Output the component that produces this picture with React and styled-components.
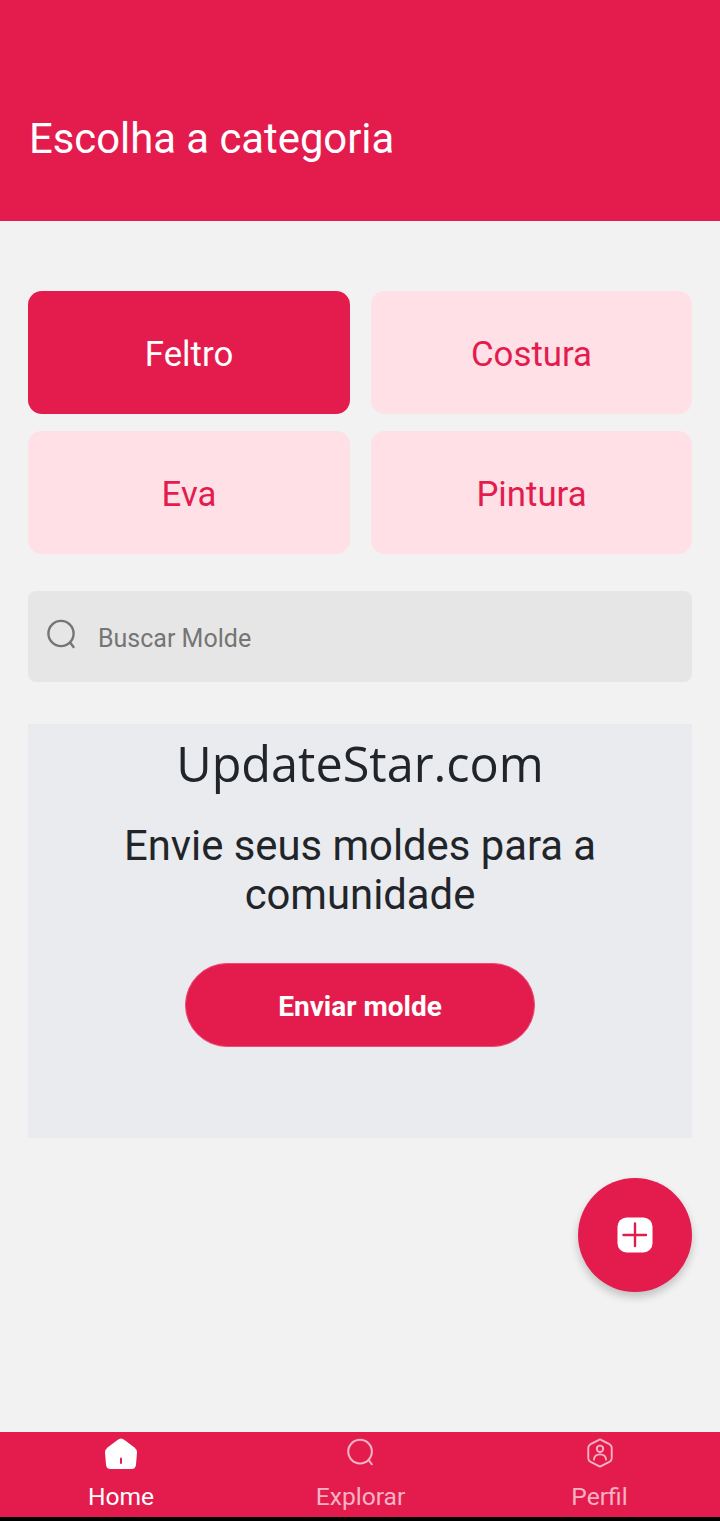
import React from "react";
import styled, {createGlobalStyle} from "styled-components";

const RED = "#e41c4e";

const GlobalStyle = createGlobalStyle`
    html, body {
        margin: 0;
        padding: 0;
        background: #f2f2f2;
        font-family: Roboto, "Noto Sans", sans-serif;
    }
    * {
        box-sizing: border-box;
    }
`

const categories = [
    {name: "Feltro", active: true},
    {name: "Costura"},
    {name: "Eva"},
    {name: "Pintura"},
];

const SearchIcon = ({size = 32, color = "currentColor", width = 2.4}) => (
    <svg width={size} height={size} viewBox="0 0 32 32" fill="none" stroke={color} strokeWidth={width} strokeLinecap="round">
        <circle cx="15" cy="14.5" r="12.6"/>
        <path d="M24.5 24 L27.5 28"/>
    </svg>
);

const HomeIcon = () => (
    <svg width="34" height="32" viewBox="0 0 34 32">
        <path
            d="M17 0.5 Q18.8 0.5 20.5 2 L30.5 9.5 Q33 11.5 33 14.5 L32 26.5 Q31.6 31 27.5 31 L6.5 31 Q2.4 31 2 26.5 L1 14.5 Q1 11.5 3.5 9.5 L13.5 2 Q15.2 0.5 17 0.5 Z"
            fill="#fff"
        />
        <path d="M17 20.5 V25" stroke={RED} strokeWidth="2" strokeLinecap="round"/>
    </svg>
);

const ProfileIcon = () => (
    <svg width="28" height="30" viewBox="0 0 28 32" fill="none" stroke="#f5b3c4" strokeWidth="2" strokeLinecap="round" strokeLinejoin="round">
        <path d="M14 1.5 L24 6.5 Q26.5 8 26.5 10.5 V21.5 Q26.5 24 24 25.5 L14 30.5 L4 25.5 Q1.5 24 1.5 21.5 V10.5 Q1.5 8 4 6.5 Z"/>
        <circle cx="14" cy="11.5" r="3.4"/>
        <path d="M7.5 23 Q8 17.5 14 17.5 Q20 17.5 20.5 23"/>
    </svg>
);

const PlusIcon = () => (
    <svg width="36" height="36" viewBox="0 0 36 36">
        <rect width="35" height="35" x="0.5" y="0.5" rx="9" fill="#fff"/>
        <path d="M18 6.5 V29 M6.5 18 H29" stroke={RED} strokeWidth="2.4" strokeLinecap="round"/>
    </svg>
);

export default function App() {
    return (
        <Page>
            <GlobalStyle/>
            <Header>
                <Title>Escolha a categoria</Title>
            </Header>
            <Main>
                <CategoryGrid>
                    {categories.map(category => (
                        <CategoryCard key={category.name} $active={category.active}>
                            {category.name}
                        </CategoryCard>
                    ))}
                </CategoryGrid>
                <SearchBar>
                    <SearchSlot><SearchIcon size={32} color="#757575"/></SearchSlot>
                    <SearchText>Buscar Molde</SearchText>
                </SearchBar>
                <Promo>
                    <PromoBrand>UpdateStar.com</PromoBrand>
                    <PromoText>Envie seus moldes para a comunidade</PromoText>
                    <PromoButton>Enviar molde</PromoButton>
                </Promo>
                <Fab aria-label="Adicionar"><PlusIcon/></Fab>
            </Main>
            <BottomNav>
                <NavItem $active>
                    <NavIcon><HomeIcon/></NavIcon>
                    Home
                </NavItem>
                <NavItem>
                    <NavIcon><SearchIcon size={30} color="#f5b3c4" width={2.2}/></NavIcon>
                    Explorar
                </NavItem>
                <NavItem>
                    <NavIcon><ProfileIcon/></NavIcon>
                    Perfil
                </NavItem>
            </BottomNav>
            <BlackEdge/>
        </Page>
    );
}

const Page = styled.div`
    width: 720px;
    height: 1521px;
    display: flex;
    flex-direction: column;
    background: #f2f2f2;
    overflow: hidden;
`

const Header = styled.header`
    height: 221px;
    flex-shrink: 0;
    background: ${RED};
    padding: 114px 29px 0 29px;
`

const Title = styled.h1`
    margin: 0;
    font-size: 41.8px;
    line-height: 50px;
    font-weight: 400;
    color: #fff;
`

const Main = styled.main`
    flex: 1;
    position: relative;
    padding: 70px 28px 0 28px;
`

const CategoryGrid = styled.div`
    display: grid;
    grid-template-columns: 322px 321px;
    grid-auto-rows: 123px;
    column-gap: 21px;
    row-gap: 17px;
`

const CategoryCard = styled.div`
    display: flex;
    align-items: center;
    justify-content: center;
    padding-top: 3px;
    border-radius: 14px;
    font-size: 34.8px;
    background: ${props => props.$active ? RED : "#fee0e6"};
    color: ${props => props.$active ? "#fff" : RED};
`

const SearchBar = styled.div`
    height: 91px;
    margin-top: 37px;
    display: flex;
    align-items: center;
    gap: 20px;
    padding-left: 18px;
    background: #e6e6e6;
    border-radius: 8px;
`

const SearchSlot = styled.div`
    display: flex;
    margin-bottom: 4px;
`

const SearchText = styled.span`
    padding-top: 3px;
    font-size: 25px;
    color: #757575;
`

const Promo = styled.section`
    height: 414px;
    margin-top: 42px;
    display: flex;
    flex-direction: column;
    align-items: center;
    padding-top: 7px;
    background: #e9ebef;
    color: #212529;
`

const PromoBrand = styled.div`
    font-family: "Open Sans", "Noto Sans", sans-serif;
    font-size: 48.6px;
    line-height: 64px;
`

const PromoText = styled.p`
    margin: 26px 0 0 0;
    width: 520px;
    font-size: 41.8px;
    line-height: 49px;
    text-align: center;
`

const PromoButton = styled.div`
    width: 350px;
    height: 84px;
    margin-top: 44px;
    display: flex;
    align-items: center;
    justify-content: center;
    padding-top: 2px;
    background: ${RED};
    border: 1px solid #ee4a73;
    border-radius: 42px;
    font-size: 28px;
    font-weight: 700;
    color: #fff;
`

const Fab = styled.div`
    position: absolute;
    top: 957px;
    right: 28px;
    width: 114px;
    height: 114px;
    display: flex;
    align-items: center;
    justify-content: center;
    border-radius: 50%;
    background: ${RED};
    box-shadow: 0 5px 8px rgba(0, 0, 0, 0.2);
`

const BottomNav = styled.nav`
    height: 85px;
    flex-shrink: 0;
    display: grid;
    grid-template-columns: 242px 237px 241px;
    background: ${RED};
`

const NavItem = styled.div`
    display: flex;
    flex-direction: column;
    align-items: center;
    padding-top: 6px;
    font-size: 24.6px;
    line-height: 34px;
    color: ${props => props.$active ? "#fff" : "#f5b3c4"};
`

const NavIcon = styled.div`
    height: 42px;
    display: flex;
    align-items: flex-start;
    justify-content: center;
`

const BlackEdge = styled.div`
    height: 4px;
    flex-shrink: 0;
    background: #000;
`
